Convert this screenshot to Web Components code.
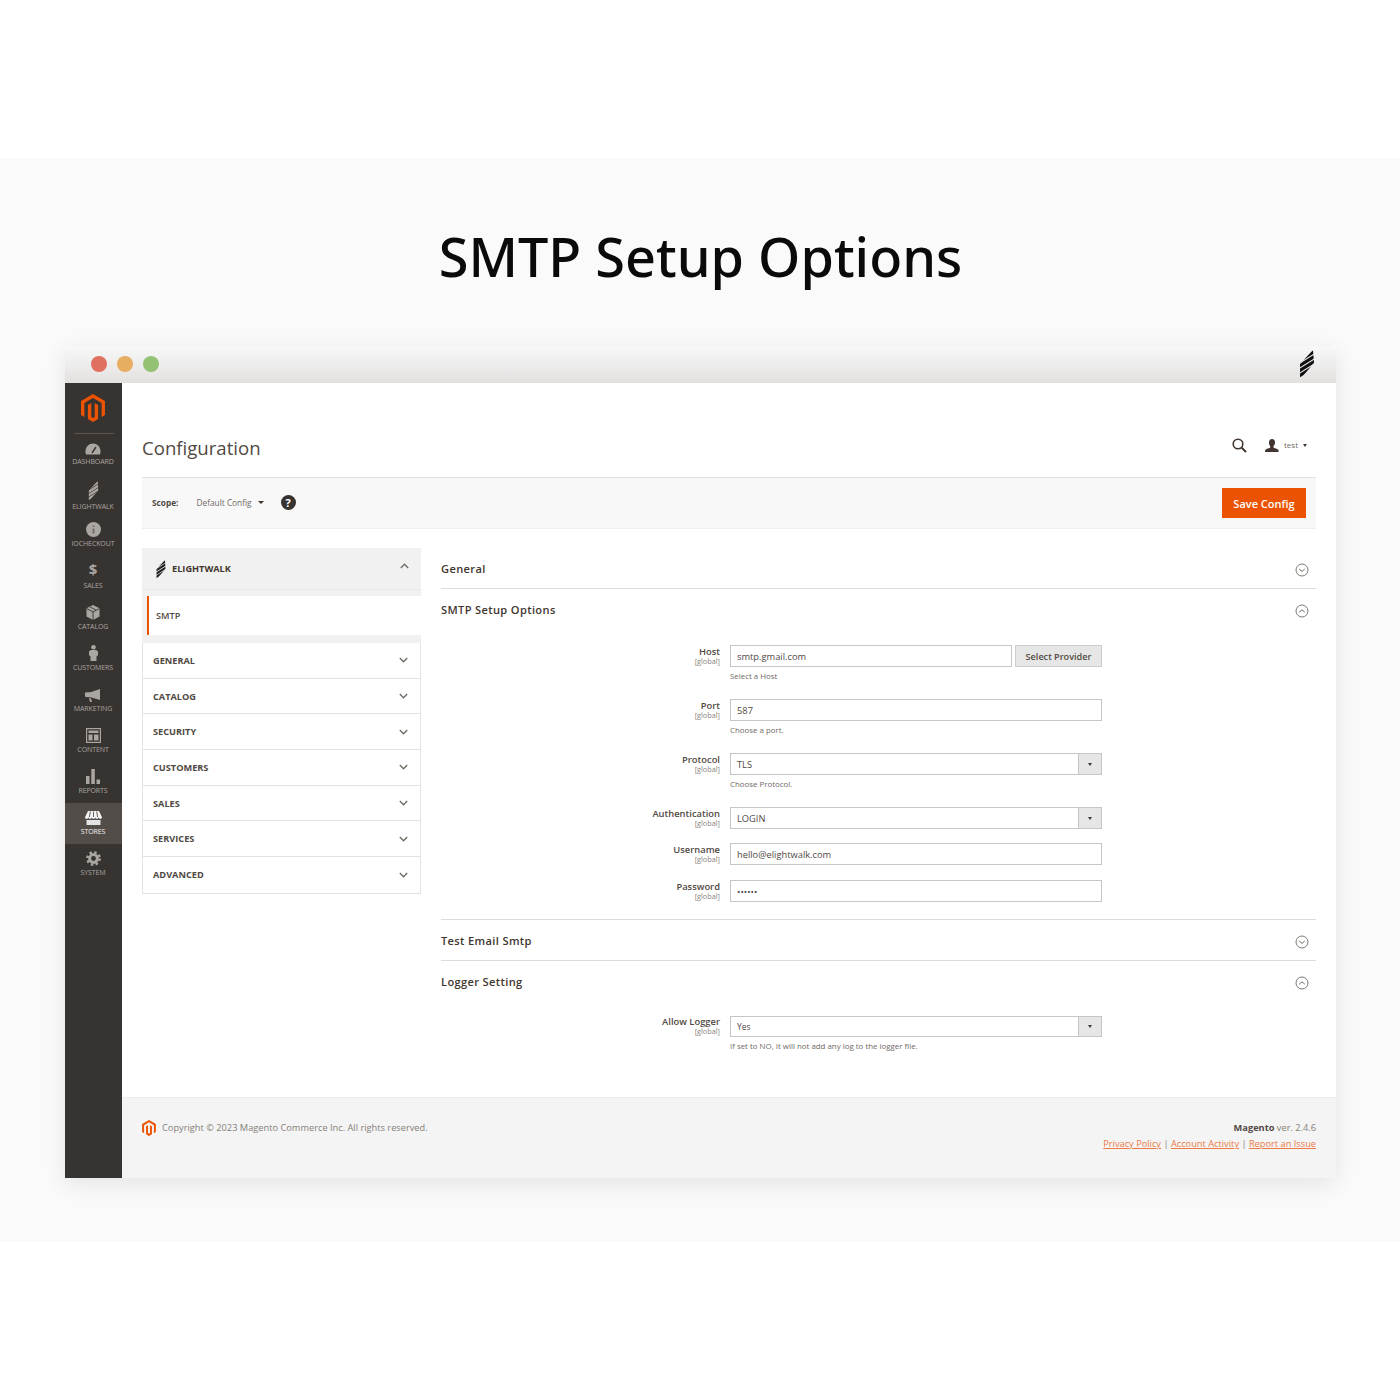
<!DOCTYPE html>
<html lang="en">
<head>
<meta charset="utf-8">
<title>SMTP Setup Options</title>
<style>
  html, body { margin: 0; background: #fff; }
  body { font-family: "Open Sans", "Noto Sans", sans-serif; color: #41362f; }
</style>
</head>
<body>
<showcase-page>
  <span slot="title">SMTP Setup Options</span>
  <app-window>
    <admin-sidebar></admin-sidebar>
    <admin-main></admin-main>
  </app-window>
</showcase-page>

<script>
const MAGENTO = `<path d="M12 0L0 7v14l3.4 2V9L12 4l8.6 5v14l3.4-2V7z"/><path d="M13.7 22.9l-1.7 1-1.7-1V9L6.9 11v14l5.1 3 5.1-3V11l-3.4-2z"/>`;

const STRIPES = `<defs><clipPath id="c"><polygon points="13,0 14,13 2,27 0,27 0,14"/></clipPath></defs>
  <g clip-path="url(#c)" stroke="currentColor" stroke-width="3.300" fill="none">
    <path d="M-1 11L15 1M-1 16L15 6M-1 21L15 11M-1 26L15 16"/>
  </g>`;

const SIDE_ICONS = {
  dashboard: `<svg width="16" height="12" viewBox="0 0 16 12"><path fill="currentColor" d="M8 .5A7.600 7.600 0 0 0 .4 8.100c0 1.200.2 2.300.7 3.400h13.800c.5-1.100.7-2.200.7-3.400A7.600 7.600 0 0 0 8 .5z"/><path d="M7 10l4-6" stroke="#373330" stroke-width="1.400"/></svg>`,
  elightwalk: `<svg width="11" height="19" viewBox="0 0 14 27">${STRIPES}</svg>`,
  info: `<svg width="15" height="15" viewBox="0 0 15 15"><circle cx="7.500" cy="7.500" r="7.500" fill="currentColor"/><path d="M7.500 6.500v5M7.500 3.500v1.500" stroke="#6f6a65" stroke-width="1.800"/></svg>`,
  box: `<svg width="14" height="15" viewBox="0 0 14 15"><path fill="currentColor" d="M7 0l6.500 3.300v8.200L7 15 .5 11.500V3.300z"/><path d="M.8 3.600L7 7l6.200-3.400M7 7v8M3.800 1.800l6.300 3.400" stroke="#373330" stroke-width=".9" fill="none"/></svg>`,
  person: `<svg width="9" height="16" viewBox="0 0 9 16"><circle cx="4.500" cy="2.300" r="2.300" fill="currentColor"/><path fill="currentColor" d="M1.800 5h5.400L9 6.500v3.800l-1.500 1V16h-6v-4.700L0 10.300V6.500z"/></svg>`,
  megaphone: `<svg width="16" height="13" viewBox="0 0 16 13"><path fill="currentColor" d="M15 0v11L5.500 8.300H3.200L0 7.800V3.600l3.200-.3h2.300zM4 9l2 .4 1 3.600H5z"/></svg>`,
  content: `<svg width="15" height="15" viewBox="0 0 15 15"><rect x=".6" y=".6" width="13.800" height="13.800" fill="none" stroke="currentColor" stroke-width="1.200"/><path fill="currentColor" d="M2.500 2.500h10v2.500h-10zM2.500 6.500h4v6h-4zM8 6.500h4.500v6H8z"/></svg>`,
  reports: `<svg width="14" height="15" viewBox="0 0 14 15"><path fill="currentColor" d="M0 7h3.500v8H0zM5.300 0h3.500v15H5.300zM10.500 10.500H14V15h-3.500z"/></svg>`,
  stores: `<svg width="17" height="14" viewBox="0 0 17 14"><path fill="currentColor" d="M3 0h11l3 6.200c0 1-.9 1.600-1.700 1.600s-1.500-.6-1.700-1.600c-.2 1-.9 1.600-1.700 1.600S10.300 7.200 10.200 6.200C10 7.200 9.300 7.800 8.500 7.800S7 7.200 6.800 6.200C6.700 7.200 6 7.800 5.100 7.800S3.600 7.200 3.400 6.200C3.200 7.200 2.500 7.800 1.700 7.800S0 7.200 0 6.200z"/><path d="M5.300.5L4.400 6M8.500.5V6M11.700.5L12.600 6" stroke="#524d49" stroke-width=".9"/><path fill="currentColor" d="M1.500 9h14v5h-14z" opacity=".9"/></svg>`,
  gear: `<svg width="15" height="15" viewBox="0 0 15 15"><circle cx="7.500" cy="7.500" r="6.200" fill="none" stroke="currentColor" stroke-width="2.400" stroke-dasharray="2.430 2.440"/><circle cx="7.500" cy="7.500" r="3.900" fill="none" stroke="currentColor" stroke-width="3"/></svg>`
};

class ShowcasePage extends HTMLElement {
  connectedCallback() {
    this.attachShadow({ mode: 'open' }).innerHTML = `
      <style>
        :host { display: block; height: 1400px; padding-top: 158px; box-sizing: border-box; }
        .band { background: #fafafa; height: 1084px; padding: 0 64px 0 65px; box-sizing: border-box; }
        h1 {
          margin: 0; height: 188px; padding-top: 63px; box-sizing: border-box;
          text-align: center; font: 500 54px/70px "Noto Sans", sans-serif; color: #0a0a0a;
        }
      </style>
      <div class="band">
        <h1><slot name="title"></slot></h1>
        <slot></slot>
      </div>`;
  }
}

class AppWindow extends HTMLElement {
  connectedCallback() {
    this.attachShadow({ mode: 'open' }).innerHTML = `
      <style>
        :host { display: block; height: 832px; box-shadow: 0 6px 22px rgba(0,0,0,.09); background: #fff; }
        .bar {
          height: 37px; display: flex; align-items: center; gap: 10px; padding: 0 22px 2px 26px; box-sizing: border-box;
          background: linear-gradient(#f8f8f8, #e3e1e0); border-radius: 4px 4px 0 0;
        }
        .dot { width: 16px; height: 16px; border-radius: 50%; }
        .mark { margin-left: auto; color: #111; display: flex; }
        .body { display: flex; height: 795px; }
      </style>
      <div class="bar">
        <span class="dot" style="background:#e0705f"></span>
        <span class="dot" style="background:#e7ae62"></span>
        <span class="dot" style="background:#93c274"></span>
        <span class="mark"><svg width="14" height="27" viewBox="0 0 14 27">${STRIPES}</svg></span>
      </div>
      <div class="body"><slot></slot></div>`;
  }
}

class AdminSidebar extends HTMLElement {
  connectedCallback() {
    const items = [
      ['dashboard', 'DASHBOARD', 40, SIDE_ICONS.dashboard],
      ['elightwalk', 'ELIGHTWALK', 45, SIDE_ICONS.elightwalk],
      ['iocheckout', 'IOCHECKOUT', 37, SIDE_ICONS.info],
      ['sales', 'SALES', 42, '<b class="dollar">$</b>'],
      ['catalog', 'CATALOG', 41, SIDE_ICONS.box],
      ['customers', 'CUSTOMERS', 41, SIDE_ICONS.person],
      ['marketing', 'MARKETING', 41, SIDE_ICONS.megaphone],
      ['content', 'CONTENT', 41, SIDE_ICONS.content],
      ['reports', 'REPORTS', 41, SIDE_ICONS.reports],
      ['stores', 'STORES', 41, SIDE_ICONS.stores],
      ['system', 'SYSTEM', 41, SIDE_ICONS.gear]
    ];
    this.attachShadow({ mode: 'open' }).innerHTML = `
      <style>
        :host { display: block; width: 57px; flex: none; background: #373330; color: #aaa6a2; }
        .logo { height: 50px; display: flex; justify-content: center; padding: 11px 1px 0 0; box-sizing: border-box; color: #eb5202; }
        .rule { height: 1px; margin: 0 8px 0 9px; background: #5a5550; }
        .item {
          display: flex; flex-direction: column; align-items: center; justify-content: flex-end;
          box-sizing: border-box; padding: 0 1px 7px 0;
          font-size: 7px; line-height: 10px; letter-spacing: -.1px; white-space: nowrap;
        }
        .item svg { display: block; margin-bottom: 2px; }
        .dollar { font: 700 15px/17px "Open Sans", sans-serif; margin-bottom: 3px; }
        .on { background: #524d49; color: #f4f4f4; }
      </style>
      <div class="logo"><svg width="24" height="28" viewBox="0 0 24 28" fill="currentColor">${MAGENTO}</svg></div>
      <div class="rule"></div>
      ${items.map(([id, label, h, icon]) => `
        <div class="item ${id === 'stores' ? 'on' : ''}" style="height:${h}px">${icon}<span>${label}</span></div>`).join('')}`;
  }
}

class AdminMain extends HTMLElement {
  connectedCallback() {
    this.attachShadow({ mode: 'open' }).innerHTML = `
      <style>
        :host { display: flex; flex-direction: column; flex: 1; min-width: 0; }
        .wrap { flex: 1; padding: 0 20px; }
        .cols { display: grid; grid-template-columns: 279px 1fr; gap: 20px; margin-top: 19px; }
      </style>
      <div class="wrap">
        <page-head></page-head>
        <scope-bar></scope-bar>
        <div class="cols">
          <config-nav></config-nav>
          <div>
            <config-section title="General"></config-section>
            <config-section title="SMTP Setup Options" open pad-top="16" pad-bottom="17">
              <field-row label="Host" value="smtp.gmail.com" note="Select a Host" button="Select Provider" height="54"></field-row>
              <field-row label="Port" value="587" note="Choose a port." height="54"></field-row>
              <field-row label="Protocol" value="TLS" note="Choose Protocol." select height="54"></field-row>
              <field-row label="Authentication" value="LOGIN" select height="36"></field-row>
              <field-row label="Username" value="hello@elightwalk.com" height="37"></field-row>
              <field-row label="Password" value="••••••" small height="22"></field-row>
            </config-section>
            <config-section title="Test Email Smtp"></config-section>
            <config-section title="Logger Setting" open pad-top="15" last>
              <field-row label="Allow Logger" value="Yes" note="If set to NO, It will not add any log to the logger file." select tiny height="40"></field-row>
            </config-section>
          </div>
        </div>
      </div>
      <admin-footer></admin-footer>`;
  }
}

class PageHead extends HTMLElement {
  connectedCallback() {
    this.attachShadow({ mode: 'open' }).innerHTML = `
      <style>
        :host { display: flex; align-items: center; height: 94px; padding: 35px 9px 0 0; box-sizing: border-box; color: #41362f; }
        h2 { margin: 0; font: 400 18.600px/28px "Open Sans", sans-serif; color: #514943; }
        .tools { margin-left: auto; display: flex; align-items: center; margin-top: -4px; }
        .user { display: flex; align-items: center; margin-left: 18px; font-size: 8px; color: #6f6a65; gap: 5px; }
        .user span:first-of-type { margin-top: -2px; }
        .caret { width: 0; height: 0; border: 2.500px solid transparent; border-top: 3px solid #41362f; border-bottom: 0; margin-left: 0; }
        svg { display: block; }
      </style>
      <h2>Configuration</h2>
      <div class="tools">
        <svg width="15" height="15" viewBox="0 0 15 15" fill="none" stroke="#41362f" stroke-width="1.600"><circle cx="6" cy="6" r="4.800"/><path d="M9.500 9.500l4.500 4.500" stroke-width="2"/></svg>
        <div class="user">
          <svg width="14" height="13" viewBox="0 0 14 13" fill="#41362f"><path d="M7 0c2 0 3 1.400 3 3.400 0 1.500-.7 3-1.500 3.700v1.200c0 .7 2 1 4 2 .8.400 1.200 1.100 1.200 2.700H0c0-1.600.4-2.300 1.200-2.700 2-1 4-1.300 4-2V7.100C4.400 6.400 4 4.900 4 3.400 4 1.400 5 0 7 0z"/></svg>
          <span>test</span><span class="caret"></span>
        </div>
      </div>`;
  }
}

class ScopeBar extends HTMLElement {
  connectedCallback() {
    this.attachShadow({ mode: 'open' }).innerHTML = `
      <style>
        :host {
          display: flex; align-items: center; height: 52px; box-sizing: border-box; padding: 0 10px;
          background: #f8f8f8; border-top: 1px solid #e3e3e3; border-bottom: 1px solid #eeeeee;
          font-size: 8.300px;
        }
        b, .scope, .caret, .help { margin-bottom: 2px; }
        b { font-weight: 700; color: #514943; }
        .scope { margin-left: 18px; color: #6f6a65; }
        .caret { width: 0; height: 0; border: 3px solid transparent; border-top: 3.500px solid #41362f; border-bottom: 0; margin-left: 6px; }
        .help {
          width: 15px; height: 15px; margin-left: 17px; border-radius: 50%; background: #373330; color: #fff;
          display: flex; align-items: center; justify-content: center; font: 700 11px/15px "Open Sans", sans-serif;
        }
        button {
          margin-left: auto; width: 84px; height: 30px; border: 0; padding: 0; background: #eb5202; color: #fff;
          font: 600 11px "Open Sans", sans-serif;
        }
      </style>
      <b>Scope:</b>
      <span class="scope">Default Config</span><span class="caret"></span>
      <span class="help">?</span>
      <button>Save Config</button>`;
  }
}

class ConfigNav extends HTMLElement {
  connectedCallback() {
    const groups = ['GENERAL', 'CATALOG', 'SECURITY', 'CUSTOMERS', 'SALES', 'SERVICES', 'ADVANCED'];
    const chev = up => `<svg width="9" height="6" viewBox="0 0 9 6" fill="none" stroke="#6f6a65" stroke-width="1.300"><path d="${up ? 'M.8 5L4.500 1.200 8.200 5' : 'M.8 1L4.500 4.800 8.200 1'}"/></svg>`;
    this.attachShadow({ mode: 'open' }).innerHTML = `
      <style>
        :host { display: block; align-self: start; font-size: 9.200px; font-weight: 700; color: #514943; }
        .head {
          display: flex; align-items: center; height: 42px; box-sizing: border-box; padding: 0 12px 0 14px;
          background: #f1f1f1; border-bottom: 1px solid #e8e8e8; color: #41362f;
        }
        .head span { margin-left: 6px; }
        .head .up { margin-left: auto; margin-top: -5px; display: flex; }
        .sub { background: #f1f1f1; padding: 6px 0 8px; }
        .smtp {
          height: 39px; margin-left: 5px; background: #fff; border-left: 2px solid #eb5202; box-sizing: border-box;
          display: flex; align-items: center; padding-left: 7px; font-weight: 600; color: #514943;
        }
        .group { border: 1px solid #e3e3e3; border-top: 0; }
        .row {
          display: flex; align-items: center; justify-content: space-between; height: 35.700px; box-sizing: border-box;
          padding: 0 12px 0 10px; border-bottom: 1px solid #e3e3e3;
        }
        .row:last-child { border-bottom: 0; }
        svg { display: block; }
      </style>
      <div class="head">
        <svg width="10" height="18" viewBox="0 0 14 27" style="color:#222">${STRIPES}</svg>
        <span>ELIGHTWALK</span>
        <i class="up">${chev(true)}</i>
      </div>
      <div class="sub"><div class="smtp">SMTP</div></div>
      <div class="group">
        ${groups.map(g => `<div class="row"><span>${g}</span>${chev(false)}</div>`).join('')}
      </div>`;
  }
}

class ConfigSection extends HTMLElement {
  connectedCallback() {
    const open = this.hasAttribute('open');
    const last = this.hasAttribute('last');
    const top = this.getAttribute('pad-top') || 0;
    const bottom = this.getAttribute('pad-bottom') || 0;
    this.attachShadow({ mode: 'open' }).innerHTML = `
      <style>
        :host { display: block; border-bottom: ${last ? 0 : '1px solid #dcdcdc'}; }
        .head {
          display: flex; align-items: center; justify-content: space-between; height: 40px; padding-right: 7px;
          font: 600 11.100px "Open Sans", sans-serif; letter-spacing: .35px; color: #41362f;
        }
        .body { display: ${open ? 'block' : 'none'}; padding: ${top}px 0 ${bottom}px; }
        svg { display: block; margin-top: 3px; }
      </style>
      <div class="head">
        <span>${this.getAttribute('title')}</span>
        <svg width="14" height="14" viewBox="0 0 14 14" fill="none" stroke="#6f6a65">
          <circle cx="7" cy="7" r="6" stroke-width=".9"/>
          <path d="${open ? 'M4.200 8.200L7 5.800 9.800 8.200' : 'M4.200 6L7 8.400 9.800 6'}" stroke-width="1"/>
        </svg>
      </div>
      <div class="body"><slot></slot></div>`;
  }
}

class FieldRow extends HTMLElement {
  connectedCallback() {
    const note = this.getAttribute('note');
    const button = this.getAttribute('button');
    const select = this.hasAttribute('select');
    const tiny = this.hasAttribute('tiny');
    const valueSize = tiny ? 8.5 : this.hasAttribute('small') ? 9 : 9.3;
    this.attachShadow({ mode: 'open' }).innerHTML = `
      <style>
        :host {
          display: grid; grid-template-columns: 279px 372px; column-gap: 10px; align-items: start;
          height: ${this.getAttribute('height')}px; color: #41362f;
        }
        .label { text-align: right; font-size: 9.400px; font-weight: 600; line-height: 10px; padding-top: ${tiny ? 1 : 2}px; color: #514943; }
        .label small { display: block; font-size: 7.300px; font-weight: 400; line-height: 8px; color: #8a837d; }
        .line { display: flex; gap: 3px; }
        .box {
          flex: 1; height: ${tiny ? 21 : 22}px; box-sizing: border-box; border: 1px solid #c8c6c4; background: #fff;
          display: flex; align-items: center; padding-left: 6px; font-size: ${valueSize}px; color: #514943;
        }
        .arrow {
          margin-left: auto; align-self: stretch; width: 22px; background: #e6e6e6; border-left: 1px solid #c8c6c4;
          display: flex; align-items: center; justify-content: center;
        }
        .arrow i { width: 0; height: 0; border: 2.500px solid transparent; border-top: 3.500px solid #41362f; border-bottom: 0; }
        button {
          width: 87px; height: 22px; border: 1px solid #cfcdcb; padding: 0; background: #e6e6e6; color: #514943;
          font: 600 9.100px "Open Sans", sans-serif;
        }
        .note { font-size: 7.900px; line-height: 10px; margin-top: 4px; color: #6f6a65; }
      </style>
      <div class="label">${this.getAttribute('label')}<small>[global]</small></div>
      <div>
        <div class="line">
          <div class="box"><span>${this.getAttribute('value')}</span>${select ? '<span class="arrow"><i></i></span>' : ''}</div>
          ${button ? `<button>${button}</button>` : ''}
        </div>
        ${note ? `<div class="note">${note}</div>` : ''}
      </div>`;
  }
}

class AdminFooter extends HTMLElement {
  connectedCallback() {
    this.attachShadow({ mode: 'open' }).innerHTML = `
      <style>
        :host {
          display: flex; justify-content: space-between; height: 81px; box-sizing: border-box; padding: 22px 20px 0;
          background: #f4f4f4; border-top: 1px solid #ececec; font-size: 9.250px; line-height: 16px; color: #857f79;
        }
        .copy { display: flex; align-items: flex-start; gap: 6px; }
        .copy svg { display: block; color: #eb5202; }
        .right { text-align: right; }
        b { color: #514943; font-weight: 700; }
        a { color: #ec7a47; text-decoration: underline; }
      </style>
      <div class="copy">
        <svg width="14" height="16" viewBox="0 0 24 28" fill="currentColor">${MAGENTO}</svg>
        <span>Copyright © 2023 Magento Commerce Inc. All rights reserved.</span>
      </div>
      <div class="right">
        <div><b>Magento</b> ver. 2.4.6</div>
        <div><a>Privacy Policy</a> | <a>Account Activity</a> | <a>Report an Issue</a></div>
      </div>`;
  }
}

customElements.define('showcase-page', ShowcasePage);
customElements.define('app-window', AppWindow);
customElements.define('admin-sidebar', AdminSidebar);
customElements.define('admin-main', AdminMain);
customElements.define('page-head', PageHead);
customElements.define('scope-bar', ScopeBar);
customElements.define('config-nav', ConfigNav);
customElements.define('config-section', ConfigSection);
customElements.define('field-row', FieldRow);
customElements.define('admin-footer', AdminFooter);
</script>
</body>
</html>
